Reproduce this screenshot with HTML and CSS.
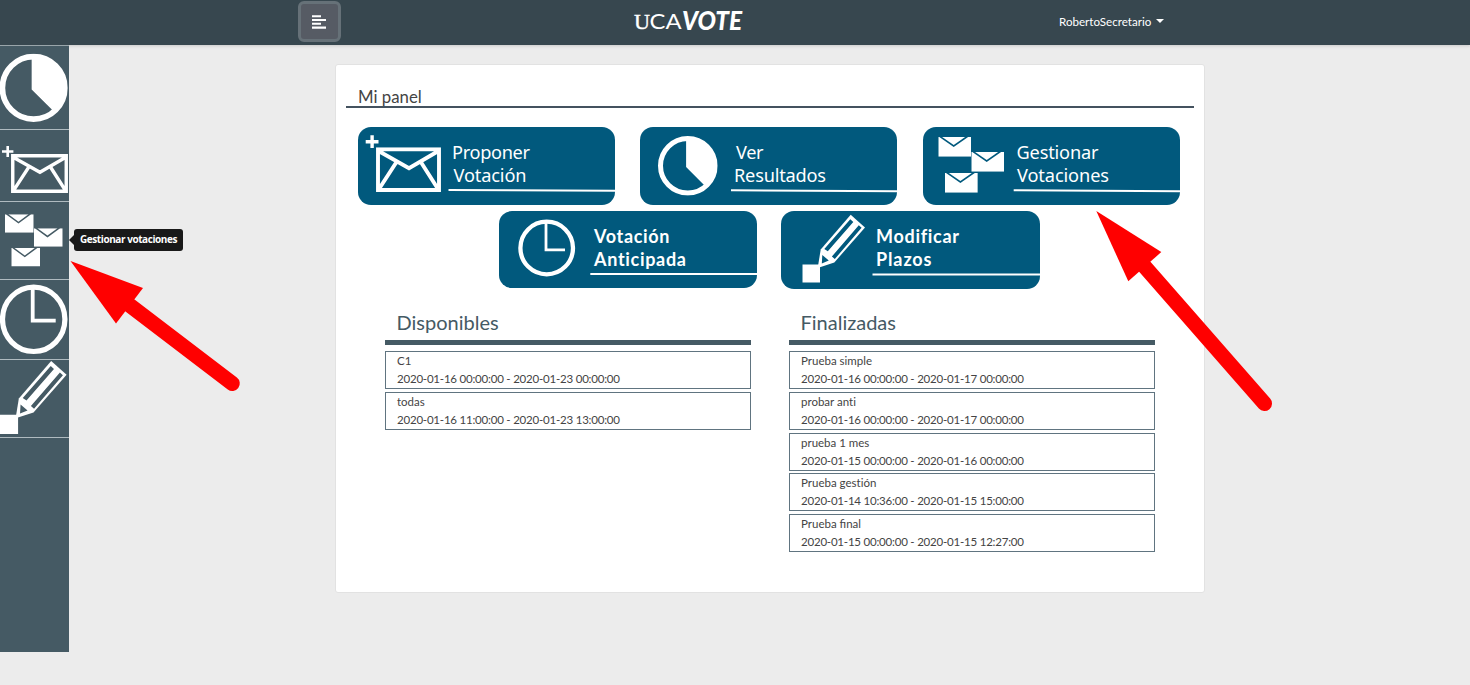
FILE: index.html
```html
<!DOCTYPE html>
<html lang="es">
<head>
<meta charset="utf-8">
<title>UCAVOTE</title>
<link rel="stylesheet" href="styles.css">
</head>
<body>
<svg class="defs" width="0" height="0">
  <symbol id="pie" viewBox="0 0 60 60"><circle cx="30" cy="30" r="27.3" fill="none" stroke="#fff" stroke-width="5"/><path d="M28.3 3V31.3L47.5 50.5A27.05 27.05 0 0 0 28.3 3Z" fill="#fff"/></symbol>
  <symbol id="envelope" viewBox="0 0 65 45" preserveAspectRatio="none"><path d="M2 2H63V43H2ZM3 4L33 21L62 4M21 14L3 42M45 15L62 42" fill="none" stroke="#fff" stroke-width="3.9"/></symbol>
  <symbol id="mail" viewBox="0 0 33 20" preserveAspectRatio="none"><path d="M0 0H1L15.5 10L30 0H33V20H0Z" fill="#fff"/><path d="M3.8 0H27L15.5 8Z" fill="#fff"/></symbol>
  <symbol id="pencil" viewBox="0 0 64 70"><path d="M0 51H17.7V69H0Z" fill="#fff"/><path d="M48.4 1.3L62.7 14L32 49L15.4 54.4L18.4 36Z" fill="#fff"/><path fill="currentColor" d="M48 5.8L51 8.5L25.5 37.8L22 35.4ZM56.5 11.8L59.3 14.3L32.5 45.5L29.6 43ZM20 41.5L26.5 47L19.5 50Z"/></symbol>
</svg>

<header class="topbar">
  <button class="toggle" aria-label="Menú"><svg width="14" height="14"><path d="M0 1.2H9M0 5H14M0 8.8H9M0 12.6H14" stroke="#fff" stroke-width="2.1"/></svg></button>
  <svg class="logo" width="124" height="42" role="img">
    <text x="2" y="27.5" class="logo-u" textLength="16" lengthAdjust="spacingAndGlyphs">U</text>
    <text x="17.5" y="27.5" class="logo-ca" textLength="32" lengthAdjust="spacingAndGlyphs">CA</text>
    <text x="50" y="29" class="logo-vote" textLength="60" lengthAdjust="spacingAndGlyphs">VOTE</text>
  </svg>
  <div class="user">RobertoSecretario<span class="caret"></span></div>
</header>

<div class="body">
  <nav class="side">
    <a class="side-item s1"><svg width="69" height="83"><use href="#pie" x="-.7" y="7.6" width="68.6" height="68.6"/></svg></a>
    <a class="side-item s2"><svg width="69" height="71"><path d="M2 21.5H13.4M7.7 16V27" stroke="#fff" stroke-width="2.6"/><use href="#envelope" x="11" y="24" width="57" height="39"/></svg></a>
    <a class="side-item s3"><svg width="69" height="77"><use href="#mail" x="5" y="12.3" width="28.7" height="18.5"/><use href="#mail" x="34" y="26.2" width="28.7" height="18.5"/><use href="#mail" x="11.3" y="46" width="28.7" height="18.5"/></svg>
      <span class="tip">Gestionar votaciones</span></a>
    <a class="side-item s4"><svg width="69" height="79"><g fill="none" stroke="#fff"><ellipse cx="33.7" cy="39.3" rx="31.2" ry="32.2" stroke-width="5.2"/><path d="M32.7 9V40.6H55.7" stroke-width="3.8"/></g></svg></a>
    <a class="side-item s5"><svg width="69" height="77"><use href="#pencil" x="-1" y="-.3" width="69" height="75.5"/></svg></a>
  </nav>

  <main class="card">
    <h1 class="title">Mi panel</h1>
    <div class="actions">
      <svg class="action" width="257" height="78"><path d="M7.7 14.7H20.5M14.1 8.3V21.1" stroke="#fff" stroke-width="3.4"/><use href="#envelope" x="18" y="20.3" width="65" height="44.7"/>
        <g class="label"><text x="94" y="32.3" textLength="78">Proponer</text><text x="95.5" y="55" textLength="73">Votación</text></g><path class="rule" d="M90.5 63L257 63.7"/></svg>
      <svg class="action" width="257" height="78"><use href="#pie" x="17.8" y="8.8" width="60" height="60"/>
        <g class="label"><text x="96" y="32.3" textLength="27.5">Ver</text><text x="94" y="55" textLength="92">Resultados</text></g><path class="rule" d="M91 63.2L257 64.2"/></svg>
      <svg class="action" width="257" height="78"><use href="#mail" x="15.3" y="10" width="32.8" height="19.8"/><use href="#mail" x="48.3" y="25" width="32.8" height="19.8"/><use href="#mail" x="22" y="46" width="32.8" height="19.8"/>
        <g class="label"><text x="93.5" y="32.3" textLength="82">Gestionar</text><text x="94" y="55" textLength="92">Votaciones</text></g><path class="rule" d="M90.7 63.2L257 64.2"/></svg>
    </div>
    <div class="actions second">
      <svg class="action" width="258" height="77"><g fill="none" stroke="#fff"><circle cx="47.7" cy="37" r="26.3" stroke-width="4.3"/><path d="M47 12V38.8H66" stroke-width="2.8"/></g>
        <g class="label strong"><text x="95" y="32.3" textLength="75.5">Votación</text><text x="95" y="55" textLength="92">Anticipada</text></g><path class="rule" d="M91.3 63H258"/></svg>
      <svg class="action" width="259" height="78"><use href="#pencil" x="21.3" y="2.5" width="64" height="70"/>
        <g class="label strong"><text x="95" y="32.3" textLength="83">Modificar</text><text x="95" y="55" textLength="55.5">Plazos</text></g><path class="rule" d="M91.5 63.5H259"/></svg>
    </div>
    <div class="lists">
      <section class="list">
        <h2>Disponibles</h2>
        <div class="vote"><p>C1</p><p class="dates">2020-01-16 00:00:00 - 2020-01-23 00:00:00</p></div>
        <div class="vote"><p>todas</p><p class="dates">2020-01-16 11:00:00 - 2020-01-23 13:00:00</p></div>
      </section>
      <section class="list">
        <h2>Finalizadas</h2>
        <div class="vote"><p>Prueba simple</p><p class="dates">2020-01-16 00:00:00 - 2020-01-17 00:00:00</p></div>
        <div class="vote"><p class="plain">probar anti</p><p class="dates">2020-01-16 00:00:00 - 2020-01-17 00:00:00</p></div>
        <div class="vote"><p>prueba 1 mes</p><p class="dates">2020-01-15 00:00:00 - 2020-01-16 00:00:00</p></div>
        <div class="vote"><p class="plain">Prueba gestión</p><p class="dates">2020-01-14 10:36:00 - 2020-01-15 15:00:00</p></div>
        <div class="vote"><p>Prueba final</p><p class="dates">2020-01-15 00:00:00 - 2020-01-15 12:27:00</p></div>
      </section>
    </div>
  </main>
</div>

<svg class="arrows" width="1470" height="685">
  <g stroke="#f00" stroke-width="15" stroke-linecap="round"><path d="M130 305.5L232.3 383.5"/><path d="M1145 267L1264.5 403.5"/></g>
  <g fill="#f00"><path d="M70.5 261L143 288L116 323.5Z"/><path d="M1096.3 211L1161.3 252L1128.3 281.3Z"/></g>
</svg>
</body>
</html>
```
FILE: styles.css
```css
* { box-sizing: border-box; }
body { margin: 0; height: 685px; overflow: hidden; background: #ececec; font-family: Lato, sans-serif; color: #444; }
h1, h2, p { margin: 0; font-weight: 400; }
.defs { position: absolute; }
.topbar { display: flex; align-items: flex-start; height: 45px; padding: 1px 0 0 298px; background: #37474f; box-shadow: 0 1px 3px rgba(0,0,0,.15); }
.toggle { display: flex; align-items: center; justify-content: center; width: 43px; height: 41px; padding: 0 2px 0 0; background: #565b64; border: 3px solid #667178; border-radius: 6px; }
.logo { margin: 0 0 0 291px; fill: #fff; overflow: visible; }
.logo-u { font: 22px "Liberation Serif", serif; stroke: #fff; stroke-width: .4px; }
.logo-ca { font: 21px Lato, sans-serif; }
.logo-vote { font: italic 900 26px Lato, sans-serif; }
.user { display: flex; align-items: center; gap: 5px; height: 40px; margin-left: 303px; font-size: 11.6px; color: #fff; }
.caret { border: 4px solid transparent; border-top-color: #fff; border-bottom: 0; }
.body { display: flex; align-items: flex-start; }
.side { width: 69px; height: 607px; background: #455a64; border-top: 1px solid #99a5aa; color: #455a64; }
.side-item { display: block; position: relative; border-bottom: 1px solid #b0bbc0; }
.side-item svg { display: block; }
.s1 { height: 84px; }
.s2 { height: 72px; }
.s3 { height: 78px; }
.s4 { height: 80px; }
.s5 { height: 78px; }
.tip { position: absolute; left: 74px; top: 27px; width: 109px; height: 22px; border-radius: 3px; background: #191919; color: #fff; font: 700 10px/21px "Open Sans", sans-serif; letter-spacing: -.43px; text-align: center; white-space: nowrap; }
.tip::before { content: ""; position: absolute; left: -5px; top: 6px; border: 5px solid transparent; border-right-color: #191919; border-left: 0; }
.card { width: 870px; height: 529px; margin: 19px 0 0 266px; padding: 21px 10px 0; background: #fff; border: 1px solid #e2e2e2; border-radius: 3px; }
.title { height: 22px; padding-left: 12px; border-bottom: 2px solid #44525f; font-size: 16.8px; line-height: 21px; }
.actions { display: flex; gap: 25.4px; padding: 19px 0 0 12px; }
.second { gap: 24px; padding: 6px 0 0 153px; }
.action { flex: none; border-radius: 13px; background: #01597d; color: #01597d; }
.label { fill: #fff; font: 18.2px "Noto Sans", sans-serif; }
.strong { font: 700 18px Lato, sans-serif; font-variant-ligatures: none; }
.rule { stroke: #fff; stroke-width: 2; }
.lists { display: flex; gap: 37.5px; padding: 18px 0 0 38.5px; }
.list { width: 366.5px; }
.list h2 { height: 38px; margin-bottom: 6px; padding-left: 12px; border-bottom: 5px solid #455a64; color: #455a64; font-size: 20px; line-height: 30px; }
.vote { height: 38px; margin-bottom: 2.75px; padding: 0 11.5px; border: 1px solid #607480; font-size: 11.5px; line-height: 18px; }
.dates { letter-spacing: -.21px; }
.plain { font-variant-ligatures: none; }
.arrows { position: absolute; left: 0; top: 0; pointer-events: none; }
```
